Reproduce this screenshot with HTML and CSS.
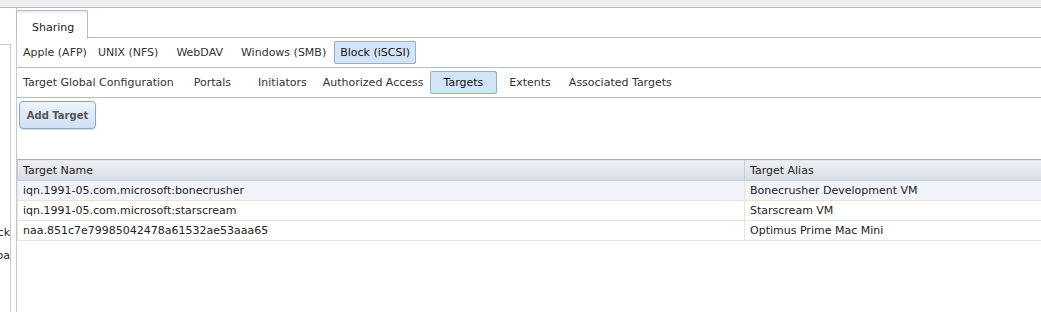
FILE: index.html
```html
<!DOCTYPE html>
<html>
<head>
<meta charset="UTF-8">
<title>Sharing</title>
<link rel="stylesheet" href="styles.css">
</head>
<body>
<div class="topbar"></div>
<div class="layout">
    <div class="sidebar">
        <div class="side-line">ck</div>
        <div class="side-line">ba</div>
    </div>
    <div class="main">
        <div class="tabbar">
            <div class="tab">Sharing</div>
        </div>

        <div class="subnav first">
            <span class="item">Apple (AFP)</span>
            <span class="item">UNIX (NFS)</span>
            <span class="item">WebDAV</span>
            <span class="item">Windows (SMB)</span>
            <span class="item active">Block (iSCSI)</span>
        </div>

        <div class="subnav second">
            <span class="item">Target Global Configuration</span>
            <span class="item">Portals</span>
            <span class="item">Initiators</span>
            <span class="item">Authorized Access</span>
            <span class="item active">Targets</span>
            <span class="item">Extents</span>
            <span class="item">Associated Targets</span>
        </div>

        <div class="toolbar">
            <button class="add-btn">Add Target</button>
        </div>

        <table class="grid">
            <thead>
                <tr>
                    <th class="col-name">Target Name</th>
                    <th>Target Alias</th>
                </tr>
            </thead>
            <tbody>
                <tr class="selected">
                    <td>iqn.1991-05.com.microsoft:bonecrusher</td>
                    <td>Bonecrusher Development VM</td>
                </tr>
                <tr>
                    <td>iqn.1991-05.com.microsoft:starscream</td>
                    <td>Starscream VM</td>
                </tr>
                <tr>
                    <td>naa.851c7e79985042478a61532ae53aaa65</td>
                    <td>Optimus Prime Mac Mini</td>
                </tr>
            </tbody>
        </table>
    </div>
</div>
</body>
</html>
```

FILE: styles.css
```css
body {
    margin: 0;
    padding: 0;
    background-color: #fff;
    font-family: 'DejaVu Sans', Verdana, sans-serif;
    font-size: 11px;
    color: #222;
    height: 312px;
    overflow: hidden;
}

.topbar {
    height: 7px;
    background-color: #eeeeee;
    border-bottom: 1px solid #b6bac4;
}

.layout {
    display: flex;
    height: 304px;
}

.sidebar {
    width: 10px;
    margin-top: 36px;
    border-top: 1px solid #c4c8d0;
    border-right: 1px solid #c4c8d0;
    overflow: hidden;
    padding-top: 181px;
}

.side-line {
    height: 23px;
    line-height: 14px;
    white-space: nowrap;
    direction: rtl;
    text-align: left;
}

.main {
    flex: 1;
    margin-left: 5px;
    border-left: 1px solid #c4c8d0;
}

.tabbar {
    height: 30px;
    padding-top: 2px;
    box-sizing: border-box;
    border-bottom: 1px solid #b6bac4;
    display: flex;
}

.tab {
    width: 72px;
    height: 29px;
    box-sizing: border-box;
    padding: 10px 0 0 15px;
    border: 1px solid #b6bac4;
    border-bottom: none;
    border-radius: 2px 2px 0 0;
    background: linear-gradient(#dfe9f6 0, #fff 3px, #fff 100%);
    margin-left: -1px;
    color: #222;
}

.subnav {
    display: flex;
    align-items: center;
    height: 30px;
    padding-left: 6px;
    border-bottom: 1px solid #b6bac4;
    box-sizing: border-box;
}

.item {
    padding: 4px 0;
    margin-right: 20px;
    color: #333;
    white-space: nowrap;
}

.item.active {
    background-color: #d3e4f7;
    border: 1px solid #8eaed2;
    border-radius: 2px;
    color: #111;
}

.first .item {
    margin-right: 18px;
}

.first .item:first-child {
    margin-right: 11px;
}

.first .item.active {
    padding: 4px 5px;
    margin-left: -10px;
}

.second .item:nth-child(2) {
    margin-right: 27px;
}

.second .item:nth-child(3) {
    margin-right: 16px;
}

.second .item.active {
    padding: 4px 13px;
    margin-left: -14px;
    margin-right: 12px;
}

.second .item:nth-child(6) {
    margin-right: 18px;
}

.toolbar {
    height: 61px;
    padding: 3px 0 0 2px;
    box-sizing: border-box;
}

.add-btn {
    font-family: 'DejaVu Sans', Verdana, sans-serif;
    font-size: 10px;
    font-weight: bold;
    color: #555;
    width: 77px;
    height: 28px;
    border: 1px solid #8ea6c4;
    border-radius: 4px;
    background: linear-gradient(#eef4fc, #cfe0f4);
    box-shadow: 0 1px 1px rgba(0, 0, 0, 0.15);
    padding: 0;
}

.grid {
    width: 100%;
    border-collapse: collapse;
}

.grid th {
    text-align: left;
    font-weight: normal;
    height: 20px;
    padding: 0 5px;
    border-top: 1px solid #a9adb6;
    border-bottom: 1px solid #c8ccd4;
    border-left: 1px solid #c8ccd4;
    background: linear-gradient(#eef0f4, #d9dde5);
    color: #222;
}

.grid .col-name {
    width: 716px;
}

.grid td {
    height: 19px;
    padding: 0 5px;
    border-bottom: 1px solid #ede2d6;
    border-left: 1px solid #ede2d6;
    white-space: nowrap;
}

.grid tr.selected td {
    background-color: #f1f5fb;
}
```
